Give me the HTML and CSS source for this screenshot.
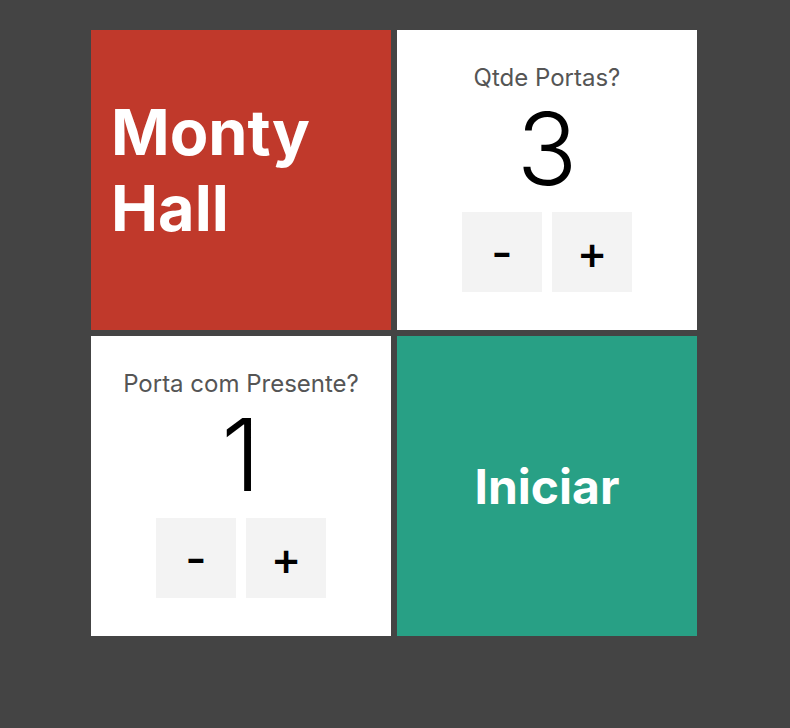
FILE: index.html
```html
<!DOCTYPE html>
<html lang="pt-BR">
<head>
<meta charset="utf-8">
<title>Monty Hall</title>
<link rel="stylesheet" href="styles.css">
</head>
<body>
<main class="grid">
  <div class="card card-red">
    <h1 class="title">Monty<br>Hall</h1>
  </div>
  <div class="card card-white">
    <div class="label">Qtde Portas?</div>
    <div class="value">3</div>
    <div class="buttons">
      <button class="btn">-</button>
      <button class="btn">+</button>
    </div>
  </div>
  <div class="card card-white">
    <div class="label">Porta com Presente?</div>
    <div class="value">1</div>
    <div class="buttons">
      <button class="btn">-</button>
      <button class="btn">+</button>
    </div>
  </div>
  <div class="card card-green">
    <span class="start">Iniciar</span>
  </div>
</main>
</body>
</html>
```
FILE: styles.css
```css
html, body {
  margin: 0;
  padding: 0;
  height: 100%;
  background: #444444;
  font-family: Inter, "Noto Sans", sans-serif;
}
.grid {
  display: grid;
  grid-template-columns: 300px 300px;
  grid-auto-rows: 300px;
  gap: 6px;
  justify-content: center;
  padding-top: 30px;
  padding-right: 2px;
}
.card {
  display: flex;
  flex-direction: column;
}
.card-red {
  background: #c0392b;
  justify-content: center;
  padding: 0 20px 20px;
}
.title {
  margin: 0;
  color: #fff;
  font-size: 63px;
  font-weight: 700;
  line-height: 1.21;
}
.card-white {
  background: #fff;
  align-items: center;
  justify-content: center;
  padding-bottom: 4px;
}
.label {
  color: #555;
  font-size: 24px;
  line-height: 1.2;
}
.value {
  color: #000;
  font-size: 100px;
  font-weight: 300;
  line-height: 1;
  margin-top: 7px;
}
.buttons {
  display: flex;
  gap: 10px;
  margin-top: 13px;
}
.btn {
  width: 80px;
  height: 80px;
  border: none;
  background: #f3f3f3;
  color: #000;
  font-family: Inter, "Noto Sans", sans-serif;
  font-size: 46px;
  font-weight: 500;
  padding: 0;
}
.card-green {
  background: #28a085;
  align-items: center;
  justify-content: center;
}
.start {
  color: #fff;
  font-size: 48px;
  font-weight: 700;
}
```
